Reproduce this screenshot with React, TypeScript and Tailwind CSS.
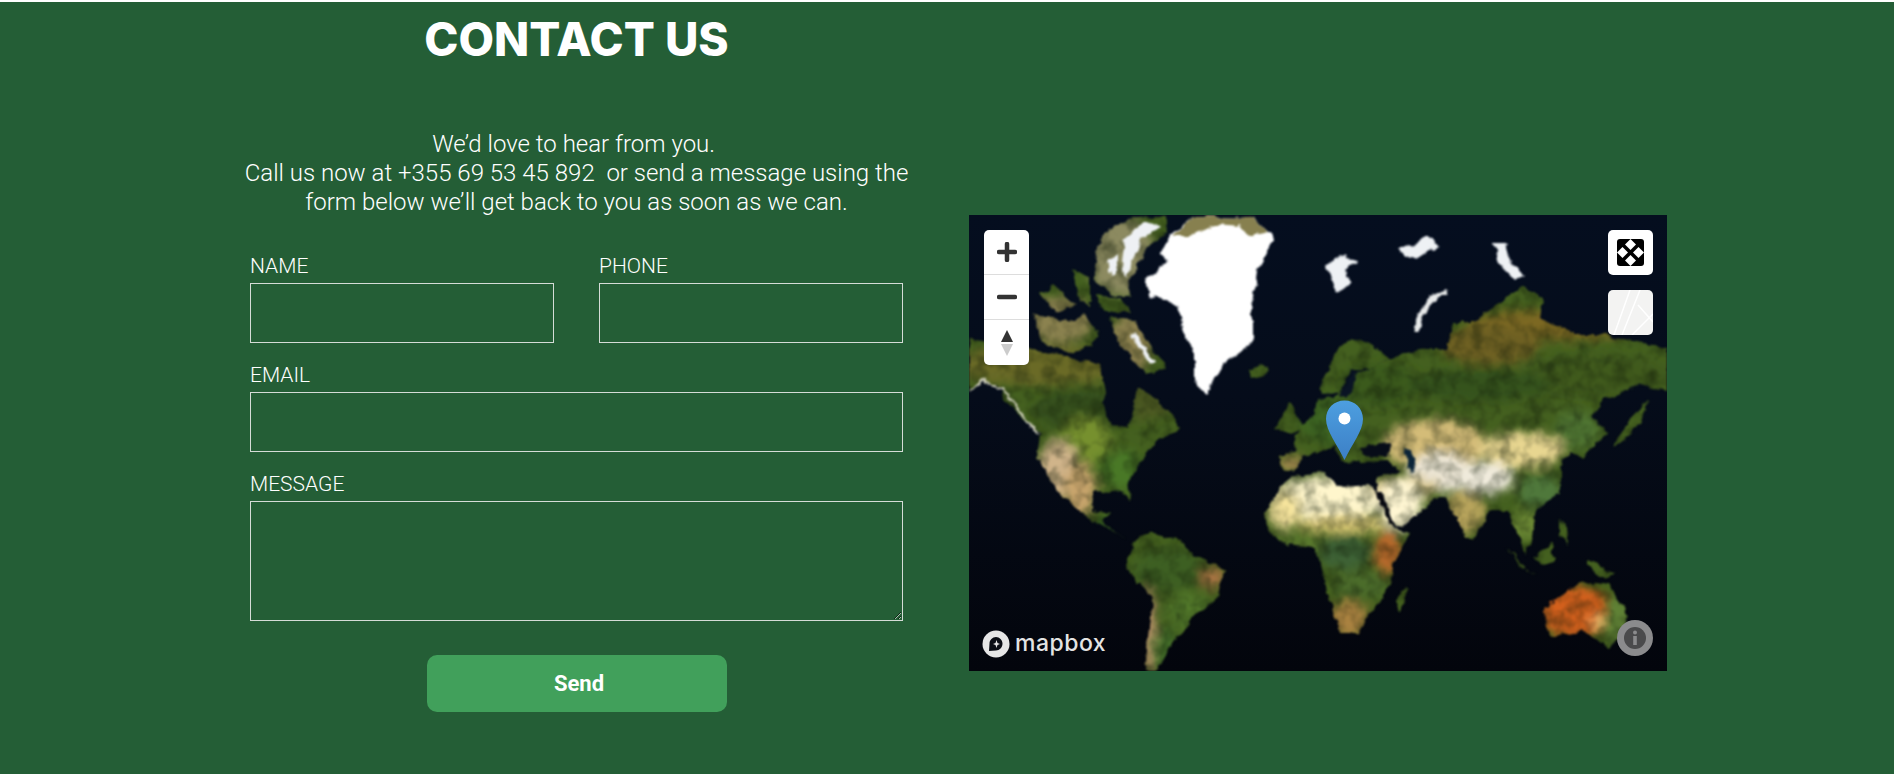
import React from "react";

// land outlines, in page pixels (the map's viewBox starts at its corner on the page)
const LAND = [
  // north america
  "M969 392 L983 381 L1000 386 L1005 400 L1022 418 L1040 433 L1037 457 L1057 490 L1087 517 L1117 533 L1130 542 L1103 523 L1113 513 L1092 510 L1093 493 L1123 490 L1131 503 L1127 483 L1140 463 L1160 437 L1180 430 L1172 415 L1160 402 L1137 386 L1133 412 L1130 427 L1112 425 L1102 405 L1106 392 L1100 364 L1080 360 L1060 355 L1027 348 L1000 343 L969 338 Z",
  // south america
  "M1133 543 L1150 532 L1177 540 L1197 557 L1225 570 L1217 597 L1193 617 L1173 643 L1157 671 L1145 671 L1150 617 L1153 597 L1130 573 L1127 563 Z",
  // africa
  "M1265 513 L1280 487 L1293 477 L1320 473 L1340 487 L1370 485 L1377 493 L1393 527 L1410 533 L1397 557 L1387 590 L1373 610 L1357 633 L1340 633 L1327 593 L1320 560 L1313 547 L1280 543 L1267 527 Z",
  // eurasia
  "M1280 457 L1297 450 L1295 438 L1303 425 L1315 415 L1318 400 L1333 398 L1345 388 L1352 375 L1373 368 L1387 358 L1420 350 L1447 348 L1453 322 L1473 322 L1507 298 L1523 285 L1543 298 L1540 318 L1580 335 L1603 335 L1667 348 L1667 392 L1640 385 L1603 400 L1593 417 L1607 433 L1583 457 L1570 452 L1560 467 L1560 493 L1537 510 L1533 530 L1530 545 L1526 556 L1518 535 L1507 510 L1490 510 L1473 540 L1463 533 L1447 497 L1430 500 L1427 507 L1397 527 L1377 497 L1377 477 L1400 470 L1390 462 L1360 463 L1343 460 L1335 445 L1318 452 L1303 457 L1293 473 L1282 470 Z",
  // scandinavia
  "M1320 385 L1340 345 L1363 338 L1387 358 L1373 368 L1350 372 L1340 392 L1322 396 Z",
  // britain, iceland, madagascar
  "M1276 428 L1290 402 L1305 428 L1290 434 Z",
  "M1250 370 L1262 364 L1271 370 L1262 379 L1252 377 Z",
  "M1395 600 L1407 587 L1404 605 L1399 614 Z",
  // indonesia, new guinea, japan, philippines
  "M1507 547 L1527 570 L1538 574 L1520 566 Z",
  "M1533 557 L1553 543 L1553 560 L1540 566 Z",
  "M1587 560 L1617 573 L1603 578 L1590 568 Z",
  "M1633 417 L1647 400 L1642 420 L1625 440 L1612 446 Z",
  "M1560 520 L1567 525 L1568 545 L1560 535 Z",
  // australia
  "M1543 608 L1560 596 L1583 581 L1609 585 L1630 617 L1610 648 L1583 632 L1550 636 Z",
  // arctic canada
  "M1103 235 L1133 217 L1167 218 L1167 232 L1147 248 L1127 285 L1130 295 L1113 295 L1093 278 L1097 255 Z",
  "M1110 318 L1133 320 L1160 362 L1167 368 L1147 375 L1120 345 Z",
  "M1033 315 L1053 318 L1073 322 L1093 345 L1070 352 L1043 342 Z",
  "M1040 295 L1053 285 L1075 305 L1057 312 Z",
  "M1073 268 L1090 278 L1090 305 L1080 302 Z",
  "M1095 295 L1120 298 L1130 312 L1105 312 Z",
  "M1070 322 L1085 315 L1100 335 L1090 342 Z",
];

// soft colour areas inside the land: cx, cy, rx, ry, colour
const AREAS: [number, number, number, number, string][] = [
  // canada
  [1040, 365, 90, 20, "#6a6a28"],
  [1140, 400, 40, 20, "#4e5a22"],
  [1085, 410, 50, 22, "#34501c"],
  // usa, mexico
  [1085, 440, 25, 24, "#76902f"],
  [1058, 468, 20, 28, "#d0b48a"],
  [1080, 490, 16, 28, "#c8a46c"],
  [1122, 470, 24, 20, "#4a7828"],
  [1108, 526, 16, 9, "#3f7028"],
  // south america
  [1170, 570, 36, 22, "#3c5f20"],
  [1212, 578, 12, 11, "#a87342"],
  [1190, 612, 22, 18, "#527a2c"],
  [1148, 630, 8, 44, "#b48e66"],
  [1165, 650, 14, 22, "#4c7a2e"],
  // africa
  [1330, 498, 60, 22, "#fff6cc"],
  [1285, 510, 16, 20, "#f6e49c"],
  [1345, 524, 48, 8, "#e8d47c"],
  [1300, 542, 30, 6, "#608030"],
  [1345, 552, 26, 18, "#3c6234"],
  [1388, 552, 13, 22, "#b8692a"],
  [1362, 585, 28, 14, "#4c6c2a"],
  [1348, 618, 20, 18, "#aa8240"],
  // europe, russia
  [1330, 420, 30, 24, "#3e6520"],
  [1292, 463, 12, 8, "#b89858"],
  [1380, 385, 40, 22, "#3a5a1a"],
  [1555, 325, 90, 16, "#7c6722"],
  [1490, 345, 50, 20, "#6e6020"],
  [1600, 375, 70, 22, "#3f5a1f"],
  [1480, 385, 70, 16, "#35531a"],
  // central asia
  [1435, 445, 52, 26, "#d4bc78"],
  [1440, 472, 32, 20, "#ece5d4"],
  [1405, 488, 34, 12, "#d4c288"],
  [1522, 450, 42, 18, "#e8d690"],
  [1486, 478, 28, 16, "#f0ebdc"],
  [1578, 430, 22, 20, "#4f7430"],
  [1540, 492, 22, 18, "#50783a"],
  // arabia, india, south east
  [1400, 505, 22, 26, "#fff6d2"],
  [1465, 512, 20, 22, "#b8a45c"],
  [1525, 525, 16, 14, "#6d8a34"],
  // australia
  [1575, 612, 36, 26, "#d4611a"],
  [1618, 620, 14, 26, "#5e8134"],
  [1598, 622, 6, 7, "#e8c070"],
  // arctic
  [1120, 255, 34, 40, "#8c8a60"],
  [1130, 345, 22, 30, "#8e8250"],
  [1060, 320, 34, 24, "#8b8250"],
];

const SNOW = [
  "M1125 238 L1145 222 L1160 225 L1142 240 L1126 278 L1122 262 Z",
  "M1108 262 L1116 255 L1116 274 L1112 276 Z",
  "M1134 332 L1155 362 L1150 364 L1131 336 Z",
  "M1326 265 L1345 255 L1358 262 L1345 270 L1352 285 L1336 292 Z",
  "M1398 250 L1412 245 L1425 235 L1440 245 L1425 255 L1405 258 Z",
  "M1493 243 L1505 243 L1512 265 L1525 275 L1515 280 L1498 262 Z",
];

function WorldMap() {
  return (
    <svg viewBox="969 215 698 456" className="block w-full h-full">
      <defs>
        <linearGradient id="sea" x1="0" y1="0" x2="0" y2="1">
          <stop offset="0" stopColor="#050e1f" />
          <stop offset="0.4" stopColor="#050c1a" />
          <stop offset="1" stopColor="#03050c" />
        </linearGradient>
        <linearGradient id="pin" x1="0" y1="0" x2="0" y2="1">
          <stop offset="0" stopColor="#4d9fe0" />
          <stop offset="1" stopColor="#3c7fc6" />
        </linearGradient>
        <mask id="land" maskUnits="userSpaceOnUse" x="969" y="215" width="698" height="456">
          {LAND.map((d) => (
            <path key={d} d={d} fill="#fff" />
          ))}
        </mask>
        <filter id="coast" filterUnits="userSpaceOnUse" x="969" y="215" width="698" height="456" colorInterpolationFilters="sRGB">
          <feTurbulence type="fractalNoise" baseFrequency="0.09" numOctaves="4" seed="4" result="n" />
          <feDisplacementMap in="SourceGraphic" in2="n" scale="8" xChannelSelector="R" yChannelSelector="G" />
          <feGaussianBlur stdDeviation="0.8" />
        </filter>
        <filter id="soft" filterUnits="userSpaceOnUse" x="969" y="215" width="698" height="456">
          <feGaussianBlur stdDeviation="5" />
        </filter>
        <filter id="mottle" filterUnits="userSpaceOnUse" x="969" y="215" width="698" height="456" colorInterpolationFilters="sRGB">
          <feTurbulence type="fractalNoise" baseFrequency="0.07" numOctaves="3" seed="12" />
          <feColorMatrix type="matrix" values="0 0 0 0 0.06  0 0 0 0 0.1  0 0 0 0 0.03  1 0 0 0 -0.38" />
        </filter>
      </defs>
      <rect x="969" y="215" width="698" height="456" fill="url(#sea)" />
      <g filter="url(#coast)">
        <g mask="url(#land)">
          <rect x="969" y="215" width="698" height="456" fill="#44601f" />
          <g filter="url(#soft)">
            {AREAS.map(([cx, cy, rx, ry, fill]) => (
              <ellipse key={`${cx}-${cy}`} cx={cx} cy={cy} rx={rx} ry={ry} fill={fill} />
            ))}
          </g>
          <rect x="969" y="215" width="698" height="456" filter="url(#mottle)" />
        </g>
        {/* black sea, caspian, red sea, baltic */}
        <path d="M1360 446 L1390 443 L1388 458 L1362 456 Z" fill="#070c18" />
        <path d="M1405 448 L1412 450 L1416 472 L1408 468 Z" fill="#0b2438" />
        <path d="M1375 492 L1382 494 L1396 526 L1390 524 Z" fill="#05070f" />
        <path d="M1340 395 L1352 372 L1356 378 L1348 398 Z" fill="#0a1424" />
        {/* greenland */}
        <path d="M1193 217 L1253 218 L1275 238 L1257 272 L1253 305 L1253 338 L1247 347 L1223 365 L1207 395 L1193 382 L1193 348 L1183 332 L1177 305 L1150 295 L1147 278 L1167 262 L1160 255 L1170 235 Z" fill="#ffffff" />
        <path d="M1193 217 L1253 218 L1268 232 L1250 236 L1240 226 L1215 224 L1190 236 L1172 236 Z" fill="#87804f" />
        {SNOW.map((d) => (
          <path key={d} d={d} fill="#eef1f4" />
        ))}
        <path d="M1417 332 C1418 312 1430 298 1445 292" fill="none" stroke="#e8eaea" strokeWidth="5" />
        <path d="M970 392 L983 380 L1003 390 L1020 412 L1038 434" fill="none" stroke="#cfcfbc" strokeWidth="2" />
      </g>
      {/* marker */}
      <path d="M1344.500 400.500 C1334 400.500 1326 408.500 1326 419 C1326 431 1337 444 1344.500 460 C1352 444 1363 431 1363 419 C1363 408.500 1355 400.500 1344.500 400.500 Z" fill="url(#pin)" />
      <circle cx="1344.500" cy="418.500" r="6" fill="#ffffff" />
    </svg>
  );
}

function MapControls() {
  return (
    <>
      <div className="absolute left-[15px] top-[15px] w-[45px] h-[135px] bg-white rounded-[5px] flex flex-col">
        <div className="h-[45px] flex items-center justify-center border-b border-[#ddd]">
          <svg width="20" height="20" viewBox="0 0 20 20">
            <path d="M10 2 V18 M2 10 H18" stroke="#333" strokeWidth="4.500" strokeLinecap="round" />
          </svg>
        </div>
        <div className="h-[45px] flex items-center justify-center border-b border-[#ddd]">
          <svg width="20" height="20" viewBox="0 0 20 20">
            <path d="M2 10 H18" stroke="#333" strokeWidth="4.500" strokeLinecap="round" />
          </svg>
        </div>
        <div className="h-[45px] flex items-center justify-center">
          <svg width="14" height="28" viewBox="0 0 14 28">
            <path d="M7 1 L13 13 H1 Z" fill="#333" />
            <path d="M1 15 H13 L7 27 Z" fill="#ccc" />
          </svg>
        </div>
      </div>
      <div className="absolute right-[14px] top-[15px] w-[45px] h-[45px] bg-white rounded-[5px] flex items-center justify-center">
        <svg width="27" height="27" viewBox="0 0 27 27">
          <rect width="27" height="27" rx="3" fill="#000" />
          <path d="M13.500 0 L19 5.500 L13.500 11 L8 5.500 Z" fill="#fff" />
          <path d="M13.500 27 L19 21.500 L13.500 16 L8 21.500 Z" fill="#fff" />
          <path d="M0 13.500 L5.500 8 L11 13.500 L5.500 19 Z" fill="#fff" />
          <path d="M27 13.500 L21.500 8 L16 13.500 L21.500 19 Z" fill="#fff" />
        </svg>
      </div>
      <div className="absolute right-[14px] top-[75px] w-[45px] h-[45px] bg-[#f3f3f2] rounded-[5px] overflow-hidden">
        <svg width="45" height="45" viewBox="0 0 45 45">
          <path d="M6 45 L22 0 M14 45 L32 0 M24 45 L45 24 M30 15 L45 32" stroke="#fff" strokeWidth="1.500" fill="none" />
        </svg>
      </div>
      <div className="absolute left-[13px] bottom-[13px] flex items-center gap-[5px]">
        <svg width="28" height="28" viewBox="0 0 28 28">
          <circle cx="14" cy="14" r="13.500" fill="#e6e6e6" />
          <path d="M7 21 L7.500 13.500 C7.500 10 10.500 7 14 7 C17.500 7 20.500 10 20.500 13.500 C20.500 17.500 17.500 20.500 14 20.500 Z" fill="#0a0d14" />
          <path d="M14.500 10 L15.500 13 L18 14 L15.500 15 L14.500 18 L13.500 15 L11 14 L13.500 13 Z" fill="#e6e6e6" />
        </svg>
        <span className="font-['Inter',sans-serif] font-medium text-[23px] leading-none tracking-[0.5px] text-[#e4e4e4] -mt-[2px]">
          mapbox
        </span>
      </div>
      <div className="absolute right-[14px] bottom-[15px] w-[36px] h-[36px] rounded-full bg-[#8b8b8d] flex items-center justify-center">
        <svg width="24" height="24" viewBox="0 0 24 24">
          <circle cx="12" cy="12" r="11" fill="#4a4a4c" />
          <circle cx="12" cy="6.500" r="2" fill="#8b8b8d" />
          <rect x="10.200" y="10" width="3.600" height="9" fill="#8b8b8d" />
        </svg>
      </div>
    </>
  );
}

const inputClass = "block w-full h-[60px] bg-transparent border border-[#d5dcd7] outline-none";
const labelClass = "block h-[30px] pt-[1px] text-[21px] leading-[24px] font-light text-white";

export default function App() {
  return (
    <div className="h-[774px] overflow-hidden bg-[#245e36] border-t-2 border-white font-['Roboto',sans-serif]">
      <div className="flex items-start pl-[245px]">
        <div className="w-[663px] flex flex-col items-center">
          <h1 className="mt-[8px] h-[58px] font-['Inter',sans-serif] font-extrabold text-[46px] leading-[58px] text-white">
            CONTACT US
          </h1>
          <p className="mt-[62px] text-center text-[24px] leading-[29px] font-light text-white whitespace-nowrap">
            We’d love to hear from you.&nbsp;
            <br />
            Call us now at +355 69 53 45 892&nbsp; or send a message using the
            <br />
            form below we’ll get back to you as soon as we can.
          </p>
          <form className="mt-[36px] w-[653px] flex flex-col gap-[19px]">
            <div className="grid grid-cols-2 gap-[45px]">
              <div>
                <label className={labelClass}>NAME</label>
                <input className={inputClass} />
              </div>
              <div>
                <label className={labelClass}>PHONE</label>
                <input className={inputClass} />
              </div>
            </div>
            <div>
              <label className={labelClass}>EMAIL</label>
              <input className={inputClass} />
            </div>
            <div>
              <label className={labelClass}>MESSAGE</label>
              <textarea className="block w-full h-[120px] bg-transparent border border-[#d5dcd7] outline-none" />
            </div>
            <button
              type="button"
              className="mt-[15px] self-center w-[300px] h-[57px] pl-[5px] rounded-[10px] bg-[#41a05b] text-white font-bold text-[22px]"
            >
              Send
            </button>
          </form>
        </div>
        <div className="relative ml-[61px] mt-[213px] w-[698px] h-[456px] overflow-hidden">
          <WorldMap />
          <MapControls />
        </div>
      </div>
    </div>
  );
}
